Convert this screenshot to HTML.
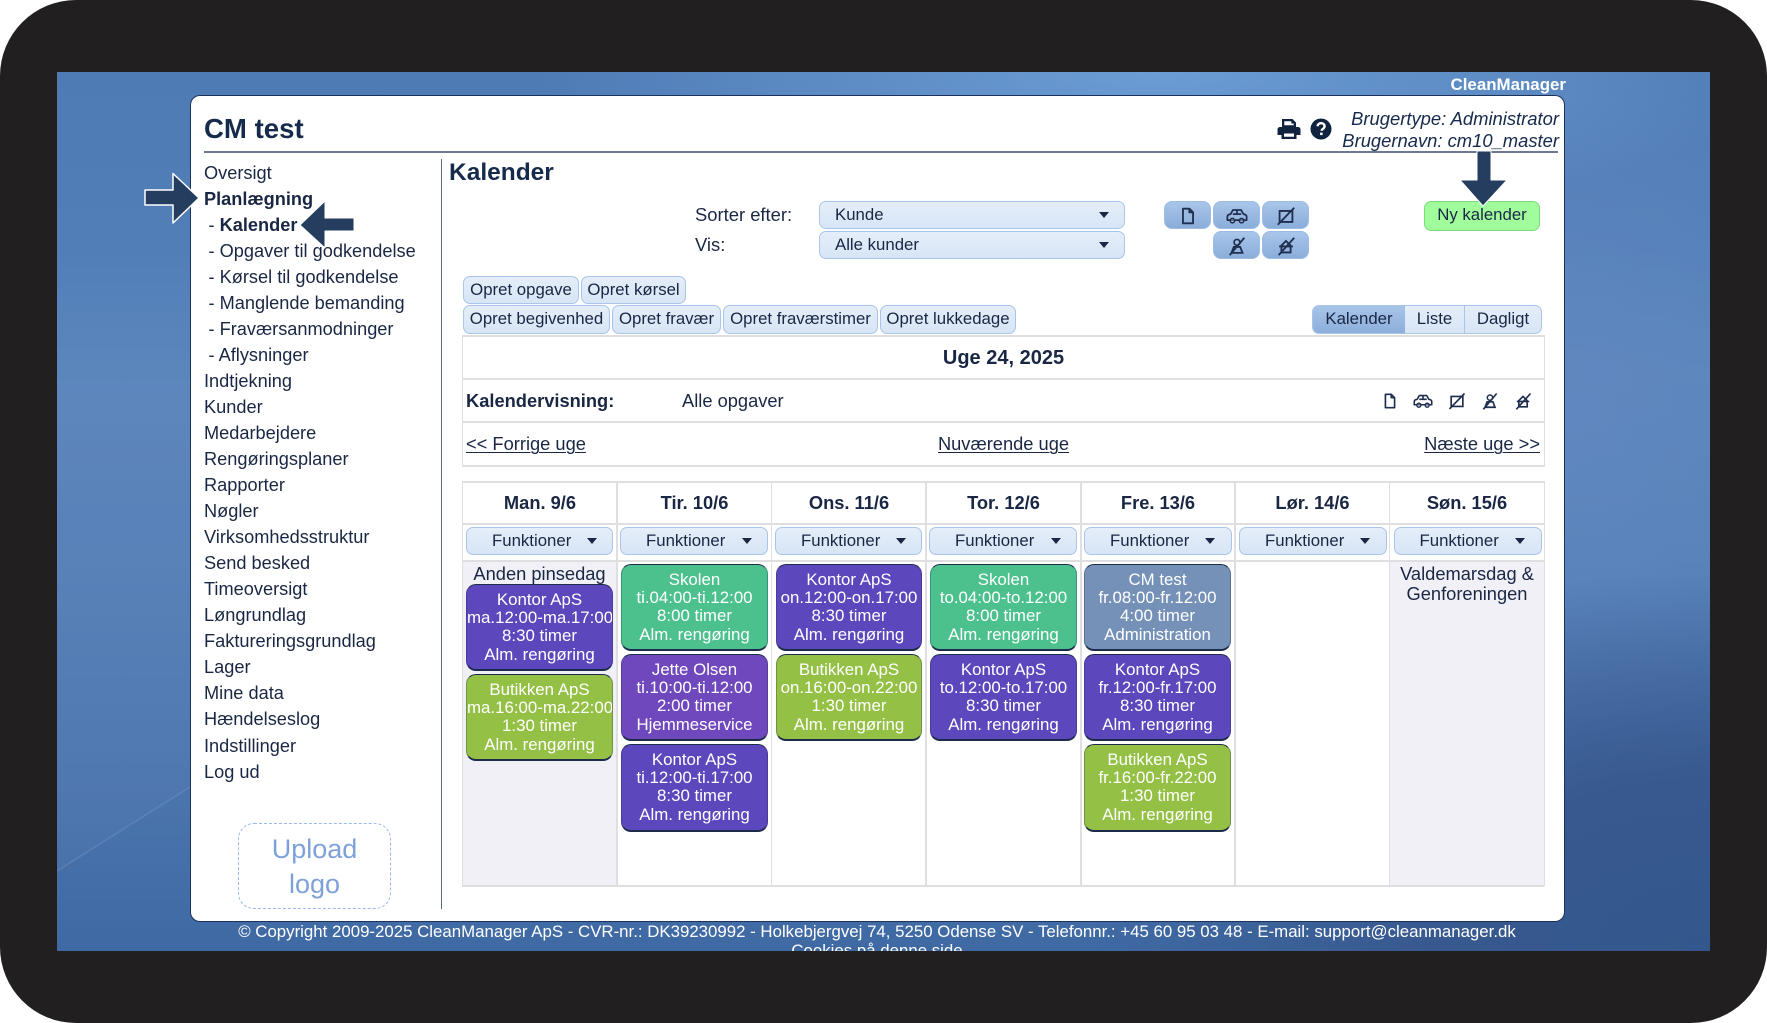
<!DOCTYPE html>
<html lang="da">
<head>
<meta charset="utf-8">
<title>CM test - Kalender</title>
<style>
*{box-sizing:border-box}
html,body{margin:0;padding:0;width:1767px;height:1023px;overflow:hidden;background:#fff}
body{position:relative;font-family:"Liberation Sans",sans-serif;color:#1a2744}
.a{position:absolute;white-space:nowrap}
#frame{position:absolute;left:0;top:0;width:1767px;height:1023px;background:#221f20;border-radius:76px}
#bg{position:absolute;left:57px;top:72px;width:1653px;height:879px;overflow:hidden;
background:
radial-gradient(ellipse 620px 150px at 1100px 0,#6c9dd4 0,rgba(108,157,212,0) 100%),
radial-gradient(ellipse 360px 400px at 1500px 330px,rgba(98,136,192,.8) 0,rgba(98,136,192,0) 100%),
linear-gradient(180deg,#4f7bb5 0,#527eb8 20%,#5b86bc 34%,#5680b8 55%,#4e77af 78%,#3f69a3 100%)}
#bg .streak{position:absolute;left:0;top:0;width:1653px;height:879px}
#bg .rdark{position:absolute;left:0;top:0;width:1653px;height:879px;background:radial-gradient(ellipse 620px 380px at 1653px 879px,#33578c 0,#37598f 45%,rgba(55,89,143,0) 100%)}
#panel{position:absolute;left:191px;top:96px;width:1373px;height:825px;background:#fff;border-radius:9px;box-shadow:0 0 0 1px #1d3259}
.hr{position:absolute;left:204px;top:151px;width:1354px;height:2px;background:#6b7a90}
.vr{position:absolute;left:440.500px;top:159px;width:1.500px;height:750px;background:#5a6b86}
#menu{position:absolute;left:204px;top:159.500px;font-size:18.2px;line-height:26.05px;white-space:nowrap}
#menu div.s{padding-left:4.500px}
#menu b{font-weight:700}
.btn{position:absolute;border:1.500px solid #a9c5ea;border-radius:7px;background:linear-gradient(180deg,#e5eef9,#d7e5f6);font-size:16.8px;text-align:center;white-space:nowrap;color:#1a2744;line-height:25.5px}
.ib{position:absolute;border:1px solid #9dbce4;border-radius:8px;background:linear-gradient(180deg,#a9c5e9,#8aadda);width:47px;height:28px}
.ib svg{position:absolute;left:12px;top:3px}
.caret{position:absolute;width:0;height:0;border-left:5.500px solid transparent;border-right:5.500px solid transparent;border-top:6.500px solid #1a2744}
.line{position:absolute;background:#dfdfe2}
.hol{position:absolute;background:#f0f0f6}
.e{position:absolute;border:1px solid #1c2b4a;border-left-color:rgba(28,43,74,.3);border-right-color:rgba(28,43,74,.3);border-bottom-width:2px;border-radius:10px;color:#fff;font-size:16.85px;line-height:18.2px;text-align:center;padding-top:6px;white-space:nowrap;overflow:hidden}
.p{background:#5c47bd}.j{background:#7048bd}.g{background:#4cc18e}.o{background:#94c045}.b{background:#7591b8}
.d{position:absolute;font-weight:700;font-size:18.3px;text-align:center;width:154px;top:491px;line-height:24px}
.t18{font-size:18.3px;line-height:24px}
u{text-decoration-thickness:1px;text-underline-offset:2px}
</style>
</head>
<body>
<svg width="0" height="0" style="position:absolute">
<defs>
<symbol id="i-doc" viewBox="0 0 24 24"><path d="M6.500 4h7l4 4v12h-11zM13.500 4v4h4" fill="none" stroke="#1f2f4f" stroke-width="2" stroke-linejoin="round"/></symbol>
<symbol id="i-car" viewBox="0 0 24 24"><path d="M1.500 13c0-2 1.500-2.800 3.500-3l2.500-4.500h9l2.500 4.500c2 .2 3.500 1 3.500 3v3.500H1.500zM7.500 10h9M12 5.500V10" fill="none" stroke="#1f2f4f" stroke-width="1.900" stroke-linejoin="round"/><circle cx="7" cy="17" r="2.400" fill="#fff" fill-opacity=".3" stroke="#1f2f4f" stroke-width="1.700"/><circle cx="17" cy="17" r="2.400" fill="#fff" fill-opacity=".3" stroke="#1f2f4f" stroke-width="1.700"/></symbol>
<symbol id="i-sq" viewBox="0 0 24 24"><path d="M5 6.500h14v12H5zM3 21.500L21 3" fill="none" stroke="#1f2f4f" stroke-width="2"/></symbol>
<symbol id="i-per" viewBox="0 0 24 24"><circle cx="12" cy="8" r="3.200" fill="none" stroke="#1f2f4f" stroke-width="1.800"/><path d="M6 19.500l2.500-6.500h7l2.500 6.500zM4 22L20 3" fill="none" stroke="#1f2f4f" stroke-width="2"/></symbol>
<symbol id="i-hou" viewBox="0 0 24 24"><path d="M7 11.500L12 6.500l5 5v7.500H7zM4.500 12.500h15M4 22L21 3" fill="none" stroke="#1f2f4f" stroke-width="2"/></symbol>
</defs>
</svg>

<div id="frame"></div>
<div id="bg">
<svg class="streak" viewBox="0 0 1653 879"><path d="M0 799L133 715" stroke="#7f9fcb" stroke-opacity=".35" stroke-width="1.500" fill="none"/><path d="M0 799L133 715V309H0z" fill="#7a9bcb" fill-opacity=".08"/></svg>
<div class="rdark"></div>
</div>

<div class="a" style="right:201px;top:75px;font-weight:700;font-size:16.9px;line-height:20px;color:#fff">CleanManager</div>

<div id="panel"></div>
<div class="a" style="left:204px;top:113px;font-size:27.6px;font-weight:700;line-height:32px;color:#162a4b">CM test</div>

<svg class="a" style="left:1277px;top:117px" width="24" height="24" viewBox="0 0 24 24"><path d="M5 2h10.500L19 5.500V10H5zM7.300 4.300v4h9.400V6.500h-2.400V4.300z" fill="#10233f" fill-rule="evenodd"/><path d="M3 10h18a2.500 2.500 0 0 1 2.500 2.500V18H19.500v4h-15v-4H.5v-5.500A2.500 2.500 0 0 1 3 10zM7 16.500v3.200h10v-3.200z" fill="#10233f" fill-rule="evenodd"/></svg>
<svg class="a" style="left:1310px;top:118px" width="22" height="22" viewBox="0 0 22 22"><circle cx="11" cy="11" r="10.500" fill="#10233f"/><path d="M7.500 8.300c.2-2 1.700-3.100 3.600-3.100 2 0 3.500 1.200 3.500 3 0 1.400-.8 2.100-1.800 2.800-.8.500-1.100.9-1.100 1.800" fill="none" stroke="#fff" stroke-width="2.400"/><rect x="10.100" y="14.600" width="2.500" height="2.500" fill="#fff"/></svg>

<div class="a" style="right:208px;top:107px;font-size:18.4px;font-style:italic;line-height:24px;color:#162a4b">Brugertype: Administrator</div>
<div class="a" style="right:208px;top:129px;font-size:18.4px;font-style:italic;line-height:24px;color:#162a4b">Brugernavn: cm10_master</div>
<div class="hr"></div>
<div class="vr"></div>

<div id="menu">
<div>Oversigt</div>
<div><b>Planlægning</b></div>
<div class="s">- <b>Kalender</b></div>
<div class="s">- Opgaver til godkendelse</div>
<div class="s">- Kørsel til godkendelse</div>
<div class="s">- Manglende bemanding</div>
<div class="s">- Fraværsanmodninger</div>
<div class="s">- Aflysninger</div>
<div>Indtjekning</div>
<div>Kunder</div>
<div>Medarbejdere</div>
<div>Rengøringsplaner</div>
<div>Rapporter</div>
<div>Nøgler</div>
<div>Virksomhedsstruktur</div>
<div>Send besked</div>
<div>Timeoversigt</div>
<div>Løngrundlag</div>
<div>Faktureringsgrundlag</div>
<div>Lager</div>
<div>Mine data</div>
<div>Hændelseslog</div>
<div>Indstillinger</div>
<div>Log ud</div>
</div>

<div class="a" style="left:238px;top:823px;width:153px;height:86px;border:1px dashed #9ab8e8;border-radius:16px"></div>
<div class="a" style="left:238px;top:832px;width:153px;text-align:center;font-size:27px;line-height:35px;color:#7ea1d9;white-space:normal">Upload<br>logo</div>

<div class="a" style="left:449px;top:158px;font-size:24.5px;font-weight:700;line-height:30px;color:#162a4b">Kalender</div>

<div class="a" style="left:695px;top:203px;font-size:18.4px;line-height:24px">Sorter efter:</div>
<div class="a" style="left:695px;top:233px;font-size:18.4px;line-height:24px">Vis:</div>

<div class="btn" style="left:819px;top:201px;width:306px;height:28px;text-align:left;padding-left:15px">Kunde</div>
<div class="caret" style="left:1099px;top:212px"></div>
<div class="btn" style="left:819px;top:231px;width:306px;height:28px;text-align:left;padding-left:15px">Alle kunder</div>
<div class="caret" style="left:1099px;top:242px"></div>

<div class="ib" style="left:1164px;top:201px"><svg width="22" height="22"><use href="#i-doc"/></svg></div>
<div class="ib" style="left:1213px;top:201px"><svg width="22" height="22"><use href="#i-car"/></svg></div>
<div class="ib" style="left:1262px;top:201px"><svg width="22" height="22"><use href="#i-sq"/></svg></div>
<div class="ib" style="left:1213px;top:231px"><svg width="22" height="22"><use href="#i-per"/></svg></div>
<div class="ib" style="left:1262px;top:231px"><svg width="22" height="22"><use href="#i-hou"/></svg></div>

<div class="btn" style="left:1424px;top:201px;width:116px;height:30px;background:#a1fd9c;border-color:#7ddc80">Ny kalender</div>

<div class="btn" style="left:463px;top:276px;width:116px;height:28px">Opret opgave</div>
<div class="btn" style="left:581px;top:276px;width:105px;height:28px">Opret kørsel</div>
<div class="btn" style="left:463px;top:305px;width:147px;height:29px">Opret begivenhed</div>
<div class="btn" style="left:612px;top:305px;width:109px;height:29px">Opret fravær</div>
<div class="btn" style="left:723px;top:305px;width:155px;height:29px">Opret fraværstimer</div>
<div class="btn" style="left:880px;top:305px;width:136px;height:29px">Opret lukkedage</div>

<div class="btn" style="left:1311.500px;top:305px;width:94px;height:29px;background:linear-gradient(180deg,#a8c4e8,#8dafdb);border-radius:7px 0 0 7px;border-right:0">Kalender</div>
<div class="btn" style="left:1405px;top:305px;width:60px;height:29px;border-radius:0;border-right:1px solid #a9c5ea;border-left:0">Liste</div>
<div class="btn" style="left:1465px;top:305px;width:77px;height:29px;border-radius:0 7px 7px 0;border-left:0">Dagligt</div>

<!-- top info table -->
<div class="line" style="left:462px;top:335px;width:1082px;height:2px"></div>
<div class="line" style="left:462px;top:378px;width:1082px;height:2px"></div>
<div class="line" style="left:462px;top:421px;width:1082px;height:2px"></div>
<div class="line" style="left:462px;top:465px;width:1082px;height:2px"></div>
<div class="line" style="left:462px;top:335px;width:1px;height:132px"></div>
<div class="line" style="left:1543.500px;top:335px;width:1.500px;height:132px"></div>

<div class="a" style="left:462px;top:346px;width:1083px;text-align:center;font-weight:700;font-size:20px;line-height:24px">Uge 24, 2025</div>
<div class="a t18" style="left:466px;top:389px;font-weight:700">Kalendervisning:</div>
<div class="a t18" style="left:682px;top:389px">Alle opgaver</div>
<svg class="a" style="left:1380px;top:391px" width="20" height="20"><use href="#i-doc"/></svg>
<svg class="a" style="left:1413px;top:391px" width="20" height="20"><use href="#i-car"/></svg>
<svg class="a" style="left:1447px;top:391px" width="20" height="20"><use href="#i-sq"/></svg>
<svg class="a" style="left:1480px;top:391px" width="20" height="20"><use href="#i-per"/></svg>
<svg class="a" style="left:1513px;top:391px" width="20" height="20"><use href="#i-hou"/></svg>
<div class="a t18" style="left:466px;top:432px"><u>&lt;&lt; Forrige uge</u></div>
<div class="a t18" style="left:462px;top:432px;width:1083px;text-align:center"><u>Nuværende uge</u></div>
<div class="a t18" style="right:227px;top:432px"><u>Næste uge &gt;&gt;</u></div>

<!-- calendar grid -->
<div class="hol" style="left:462px;top:562px;width:154px;height:323px"></div>
<div class="hol" style="left:1389px;top:562px;width:155px;height:323px"></div>
<div class="line" style="left:462px;top:481px;width:1082px;height:1.500px"></div>
<div class="line" style="left:462px;top:523px;width:1082px;height:2px"></div>
<div class="line" style="left:462px;top:560px;width:1082px;height:2px"></div>
<div class="line" style="left:462px;top:885px;width:1082px;height:1.500px"></div>
<div class="line" style="left:462px;top:481px;width:1px;height:405px"></div>
<div class="line" style="left:616px;top:481px;width:1.500px;height:405px"></div>
<div class="line" style="left:770.500px;top:481px;width:1.500px;height:405px"></div>
<div class="line" style="left:925px;top:481px;width:1.500px;height:405px"></div>
<div class="line" style="left:1080px;top:481px;width:1.500px;height:405px"></div>
<div class="line" style="left:1234px;top:481px;width:1.500px;height:405px"></div>
<div class="line" style="left:1388.500px;top:481px;width:1.500px;height:405px"></div>
<div class="line" style="left:1543.500px;top:481px;width:1.500px;height:405px"></div>

<div class="d" style="left:463px">Man. 9/6</div>
<div class="d" style="left:617.500px">Tir. 10/6</div>
<div class="d" style="left:772px">Ons. 11/6</div>
<div class="d" style="left:926.500px">Tor. 12/6</div>
<div class="d" style="left:1081px">Fre. 13/6</div>
<div class="d" style="left:1235.500px">Lør. 14/6</div>
<div class="d" style="left:1390px">Søn. 15/6</div>

<div class="btn" style="left:466px;top:527px;width:147px;height:28px;text-align:left;padding-left:25px;line-height:26px">Funktioner</div><div class="caret" style="left:587px;top:538px"></div>
<div class="btn" style="left:620px;top:527px;width:148px;height:28px;text-align:left;padding-left:25px;line-height:26px">Funktioner</div><div class="caret" style="left:741.500px;top:538px"></div>
<div class="btn" style="left:775px;top:527px;width:147px;height:28px;text-align:left;padding-left:25px;line-height:26px">Funktioner</div><div class="caret" style="left:896px;top:538px"></div>
<div class="btn" style="left:929px;top:527px;width:148px;height:28px;text-align:left;padding-left:25px;line-height:26px">Funktioner</div><div class="caret" style="left:1051px;top:538px"></div>
<div class="btn" style="left:1084px;top:527px;width:148px;height:28px;text-align:left;padding-left:25px;line-height:26px">Funktioner</div><div class="caret" style="left:1205px;top:538px"></div>
<div class="btn" style="left:1239px;top:527px;width:148px;height:28px;text-align:left;padding-left:25px;line-height:26px">Funktioner</div><div class="caret" style="left:1360px;top:538px"></div>
<div class="btn" style="left:1393.500px;top:527px;width:148px;height:28px;text-align:left;padding-left:25px;line-height:26px">Funktioner</div><div class="caret" style="left:1515px;top:538px"></div>

<div class="a t18" style="left:462px;top:562px;width:155px;text-align:center">Anden pinsedag</div>
<div class="a" style="left:1390px;top:564px;width:154px;text-align:center;font-size:18.3px;line-height:20px">Valdemarsdag &amp;<br>Genforeningen</div>

<!-- Monday -->
<div class="e p" style="left:466px;top:584px;width:147px;height:87px">Kontor ApS<br>ma.12:00-ma.17:00<br>8:30 timer<br>Alm. rengøring</div>
<div class="e o" style="left:466px;top:674px;width:147px;height:87px">Butikken ApS<br>ma.16:00-ma.22:00<br>1:30 timer<br>Alm. rengøring</div>
<!-- Tuesday -->
<div class="e g" style="left:621px;top:564px;width:147px;height:87px">Skolen<br>ti.04:00-ti.12:00<br>8:00 timer<br>Alm. rengøring</div>
<div class="e j" style="left:621px;top:654px;width:147px;height:87px">Jette Olsen<br>ti.10:00-ti.12:00<br>2:00 timer<br>Hjemmeservice</div>
<div class="e p" style="left:621px;top:744px;width:147px;height:88px">Kontor ApS<br>ti.12:00-ti.17:00<br>8:30 timer<br>Alm. rengøring</div>
<!-- Wednesday -->
<div class="e p" style="left:776px;top:564px;width:146px;height:87px">Kontor ApS<br>on.12:00-on.17:00<br>8:30 timer<br>Alm. rengøring</div>
<div class="e o" style="left:776px;top:654px;width:146px;height:87px">Butikken ApS<br>on.16:00-on.22:00<br>1:30 timer<br>Alm. rengøring</div>
<!-- Thursday -->
<div class="e g" style="left:930px;top:564px;width:147px;height:87px">Skolen<br>to.04:00-to.12:00<br>8:00 timer<br>Alm. rengøring</div>
<div class="e p" style="left:930px;top:654px;width:147px;height:87px">Kontor ApS<br>to.12:00-to.17:00<br>8:30 timer<br>Alm. rengøring</div>
<!-- Friday -->
<div class="e b" style="left:1084px;top:564px;width:147px;height:87px">CM test<br>fr.08:00-fr.12:00<br>4:00 timer<br>Administration</div>
<div class="e p" style="left:1084px;top:654px;width:147px;height:87px">Kontor ApS<br>fr.12:00-fr.17:00<br>8:30 timer<br>Alm. rengøring</div>
<div class="e o" style="left:1084px;top:744px;width:147px;height:88px">Butikken ApS<br>fr.16:00-fr.22:00<br>1:30 timer<br>Alm. rengøring</div>

<!-- Footer -->
<div class="a" style="left:57px;top:922px;width:1640px;height:29px;overflow:hidden;text-align:center;color:#fff;font-size:16.83px;line-height:19px;white-space:normal">© Copyright 2009-2025 CleanManager ApS - CVR-nr.: DK39230992 - Holkebjergvej 74, 5250 Odense SV - Telefonnr.: +45 60 95 03 48 - E-mail: support@cleanmanager.dk<br>Cookies på denne side</div>

<!-- Arrows -->
<svg class="a" style="left:0;top:0" width="1767" height="1023" viewBox="0 0 1767 1023">
<path d="M145 190H173V173.500L199 198L173 223V205H145z" fill="#253d5f" stroke="#fff" stroke-width="1.500" stroke-linejoin="round"/>
<path d="M300 225L325 201V218H354V231H325V248z" fill="#253d5f" stroke="#fff" stroke-width="1" stroke-linejoin="round"/>
<path d="M1477 151H1491V180H1507L1483 206L1460 180H1477z" fill="#253d5f" stroke="#fff" stroke-width="1" stroke-linejoin="round"/>
</svg>
</body>
</html>
